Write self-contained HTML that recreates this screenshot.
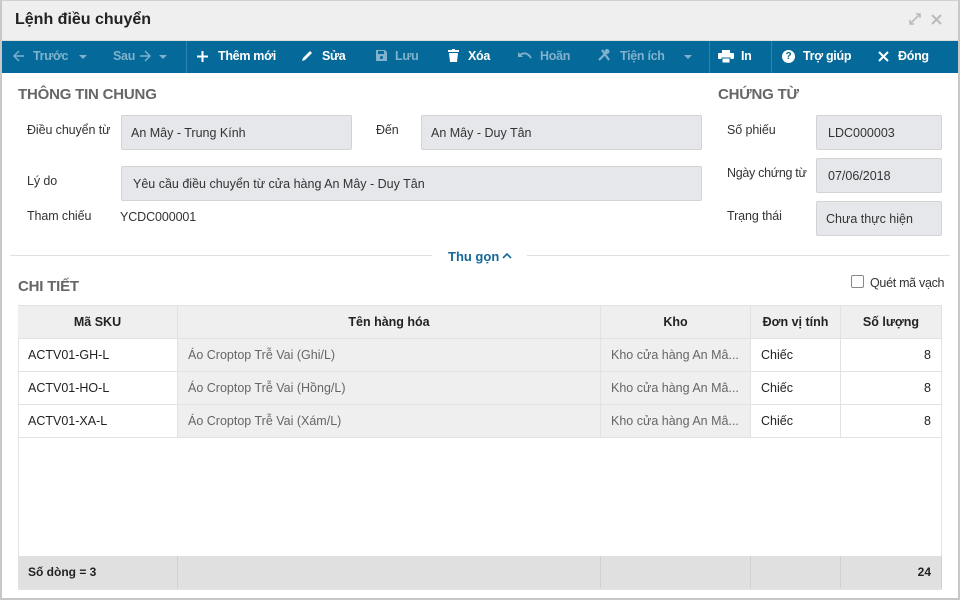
<!DOCTYPE html>
<html><head><meta charset="utf-8"><style>
*{box-sizing:border-box;margin:0;padding:0}
body{width:960px;height:600px;background:#fff;font-family:"Liberation Sans",sans-serif;position:relative;overflow:hidden;color:#222}
.a{position:absolute;white-space:nowrap}
.win{position:absolute;left:0;top:0;width:960px;height:600px;border:2px solid #c8c8c8;border-top:1px solid #d0d0d0}
.title{left:2px;top:1px;width:956px;height:40px;background:#efefef;border-bottom:1px solid #ddd}
.tb{left:2px;top:41px;width:956px;height:32px;background:#05699a}
.ti{position:absolute;top:49px;font-size:12.5px;font-weight:bold;color:#fff;letter-spacing:-0.3px;white-space:nowrap}
.dis{color:#80b2cd}
.sep{position:absolute;top:41px;width:1px;height:32px;background:#2d84ad}
.car{position:absolute;top:55px;width:0;height:0;border-left:4px solid transparent;border-right:4px solid transparent;border-top:4px solid #80b2cd}
.h{font-size:15px;font-weight:bold;color:#666;letter-spacing:-0.2px}
.lb{font-size:12.5px;color:#333;letter-spacing:-0.1px}
.in{position:absolute;background:#e6e7eb;border:1px solid #d3d3d3;border-radius:2px;font-size:12.5px;color:#333;padding-left:9px;display:flex;align-items:center;white-space:nowrap}
.c{position:absolute;font-size:12.5px;display:flex;align-items:center;border-right:1px solid #e2e2e2;border-bottom:1px solid #e2e2e2;padding:0 10px;overflow:hidden;white-space:nowrap}
.hd{background:#efefef;font-weight:bold;justify-content:center;color:#222}
.g{background:#efefef;color:#666}
.f{background:#e0e0e0;border-right:1px solid #d0d0d0;font-weight:bold;font-size:12px}
</style></head><body>
<div class="win"></div>
<div class="a title"></div>
<div class="a" style="left:15px;top:11px;font-size:16px;font-weight:bold;color:#222">Lệnh điều chuyển</div>
<svg class="a" style="left:909px;top:13px" width="12" height="12" viewBox="0 0 12 12"><path d="M1 11L11 1M7 1h4v4M1 7v4h4" stroke="#bbb" stroke-width="1.6" fill="none"/></svg>
<svg class="a" style="left:931px;top:14px" width="11" height="11" viewBox="0 0 11 11"><path d="M1 1L10 10M10 1L1 10" stroke="#bbb" stroke-width="2"/></svg>
<div class="a tb"></div>
<svg class="a" style="left:13px;top:50px" width="12" height="12" viewBox="0 0 12 12"><path d="M11 6H1M6 1L1 6l5 5" stroke="#80b2cd" stroke-width="1.4" fill="none"/></svg>
<div class="ti dis" style="left:33px">Trước</div><div class="car" style="left:79px"></div>
<div class="ti dis" style="left:113px">Sau</div>
<svg class="a" style="left:139px;top:50px" width="12" height="12" viewBox="0 0 12 12"><path d="M1 6h10M6 1l5 5-5 5" stroke="#80b2cd" stroke-width="1.4" fill="none"/></svg>
<div class="car" style="left:159px"></div>
<div class="sep" style="left:186px"></div>
<svg class="a" style="left:197px;top:51px" width="11" height="11" viewBox="0 0 11 11"><path d="M5.5 0v11M0 5.5h11" stroke="#fff" stroke-width="2"/></svg>
<div class="ti" style="left:218px">Thêm mới</div>
<svg class="a" style="left:301px;top:50px" width="12" height="12" viewBox="0 0 12 12"><path d="M1 11l1-3 7-7 2 2-7 7z" fill="#fff"/></svg>
<div class="ti" style="left:322px">Sửa</div>
<svg class="a" style="left:376px;top:50px" width="11" height="11" viewBox="0 0 11 11"><path d="M0 0h9l2 2v9H0z" fill="#80b2cd"/><rect x="2" y="1" width="6" height="3" fill="#05699a"/><circle cx="5.5" cy="7.5" r="1.5" fill="#05699a"/></svg>
<div class="ti dis" style="left:395px">Lưu</div>
<svg class="a" style="left:448px;top:49px" width="11" height="13" viewBox="0 0 11 13"><rect x="0" y="1" width="11" height="2" fill="#fff"/><rect x="4" y="0" width="3" height="2" fill="#fff"/><path d="M1 4h9l-1 9H2z" fill="#fff"/></svg>
<div class="ti" style="left:468px">Xóa</div>
<svg class="a" style="left:518px;top:51px" width="14" height="10" viewBox="0 0 14 10"><path d="M2 4c4-3 8-2 11 3" stroke="#80b2cd" stroke-width="1.8" fill="none"/><path d="M0 1v5h5z" fill="#80b2cd"/></svg>
<div class="ti dis" style="left:540px">Hoãn</div>
<svg class="a" style="left:597px;top:48px" width="14" height="14" viewBox="0 0 14 14"><path d="M2 12L9 5M5 2l7 10" stroke="#80b2cd" stroke-width="2.2"/><circle cx="10" cy="3.5" r="2.5" fill="#80b2cd"/></svg>
<div class="ti dis" style="left:620px">Tiện ích</div><div class="car" style="left:684px"></div>
<div class="sep" style="left:709px"></div>
<svg class="a" style="left:718px;top:50px" width="16" height="13" viewBox="0 0 16 13"><rect x="4" y="0" width="8" height="3" fill="#fff"/><rect x="0" y="3" width="16" height="6" rx="1" fill="#fff"/><rect x="4" y="8" width="8" height="5" fill="#fff" stroke="#05699a"/></svg>
<div class="ti" style="left:741px">In</div>
<div class="sep" style="left:771px"></div>
<div class="a" style="left:782px;top:50px;width:13px;height:13px;border-radius:50%;background:#fff;color:#05699a;font-size:10px;font-weight:bold;text-align:center;line-height:13px">?</div>
<div class="ti" style="left:803px">Trợ giúp</div>
<svg class="a" style="left:878px;top:51px" width="11" height="11" viewBox="0 0 11 11"><path d="M1 1l9 9M10 1l-9 9" stroke="#fff" stroke-width="2"/></svg>
<div class="ti" style="left:898px">Đóng</div>

<div class="a h" style="left:18px;top:86px">THÔNG TIN CHUNG</div>
<div class="a h" style="left:718px;top:86px">CHỨNG TỪ</div>
<div class="a lb" style="left:27px;top:123px">Điều chuyển từ</div>
<div class="in" style="left:121px;top:115px;width:231px;height:35px">An Mây - Trung Kính</div>
<div class="a lb" style="left:376px;top:123px">Đến</div>
<div class="in" style="left:421px;top:115px;width:281px;height:35px">An Mây - Duy Tân</div>
<div class="a lb" style="left:27px;top:174px">Lý do</div>
<div class="in" style="left:121px;top:166px;width:581px;height:35px;padding-left:11px">Yêu cầu điều chuyển từ cửa hàng An Mây - Duy Tân</div>
<div class="a lb" style="left:27px;top:209px">Tham chiếu</div>
<div class="a lb" style="left:120px;top:210px">YCDC000001</div>
<div class="a lb" style="left:727px;top:123px">Số phiếu</div>
<div class="in" style="left:816px;top:115px;width:126px;height:35px;padding-left:11px">LDC000003</div>
<div class="a lb" style="left:727px;top:166px;letter-spacing:-0.3px">Ngày chứng từ</div>
<div class="in" style="left:816px;top:158px;width:126px;height:35px;padding-left:11px">07/06/2018</div>
<div class="a lb" style="left:727px;top:209px">Trạng thái</div>
<div class="in" style="left:816px;top:201px;width:126px;height:35px">Chưa thực hiện</div>

<div class="a" style="left:10px;top:255px;width:422px;height:1px;background:#e0e0e0"></div>
<div class="a" style="left:527px;top:255px;width:423px;height:1px;background:#e0e0e0"></div>
<div class="a" style="left:448px;top:249px;font-size:13px;font-weight:bold;color:#15679a">Thu gọn</div>
<svg class="a" style="left:502px;top:252px" width="10" height="7" viewBox="0 0 10 7"><path d="M1 6l4-4 4 4" stroke="#15679a" stroke-width="1.6" fill="none"/></svg>

<div class="a h" style="left:18px;top:278px">CHI TIẾT</div>
<div class="a" style="left:851px;top:275px;width:13px;height:13px;border:1.5px solid #888;border-radius:2px"></div>
<div class="a lb" style="left:870px;top:276px;letter-spacing:-0.3px">Quét mã vạch</div>

<div class="a" style="left:18px;top:305px;width:924px;height:285px;border:1px solid #e2e2e2"></div>
<div class="c hd" style="left:18px;top:306px;width:160px;height:33px">Mã SKU</div>
<div class="c hd" style="left:178px;top:306px;width:423px;height:33px">Tên hàng hóa</div>
<div class="c hd" style="left:601px;top:306px;width:150px;height:33px">Kho</div>
<div class="c hd" style="left:751px;top:306px;width:90px;height:33px;padding:0 4px">Đơn vị tính</div>
<div class="c hd" style="left:841px;top:306px;width:101px;height:33px">Số lượng</div>

<div class="c" style="left:18px;top:339px;width:160px;height:33px">ACTV01-GH-L</div>
<div class="c g" style="left:178px;top:339px;width:423px;height:33px">Áo Croptop Trễ Vai (Ghi/L)</div>
<div class="c g" style="left:601px;top:339px;width:150px;height:33px">Kho cửa hàng An Mâ...</div>
<div class="c" style="left:751px;top:339px;width:90px;height:33px">Chiếc</div>
<div class="c" style="left:841px;top:339px;width:101px;height:33px;justify-content:flex-end">8</div>

<div class="c" style="left:18px;top:372px;width:160px;height:33px">ACTV01-HO-L</div>
<div class="c g" style="left:178px;top:372px;width:423px;height:33px">Áo Croptop Trễ Vai (Hồng/L)</div>
<div class="c g" style="left:601px;top:372px;width:150px;height:33px">Kho cửa hàng An Mâ...</div>
<div class="c" style="left:751px;top:372px;width:90px;height:33px">Chiếc</div>
<div class="c" style="left:841px;top:372px;width:101px;height:33px;justify-content:flex-end">8</div>

<div class="c" style="left:18px;top:405px;width:160px;height:33px">ACTV01-XA-L</div>
<div class="c g" style="left:178px;top:405px;width:423px;height:33px">Áo Croptop Trễ Vai (Xám/L)</div>
<div class="c g" style="left:601px;top:405px;width:150px;height:33px">Kho cửa hàng An Mâ...</div>
<div class="c" style="left:751px;top:405px;width:90px;height:33px">Chiếc</div>
<div class="c" style="left:841px;top:405px;width:101px;height:33px;justify-content:flex-end">8</div>

<div class="c f" style="left:18px;top:556px;width:160px;height:33px">Số dòng = 3</div>
<div class="c f" style="left:178px;top:556px;width:423px;height:33px"></div>
<div class="c f" style="left:601px;top:556px;width:150px;height:33px"></div>
<div class="c f" style="left:751px;top:556px;width:90px;height:33px"></div>
<div class="c f" style="left:841px;top:556px;width:101px;height:33px;justify-content:flex-end">24</div>
</body></html>
